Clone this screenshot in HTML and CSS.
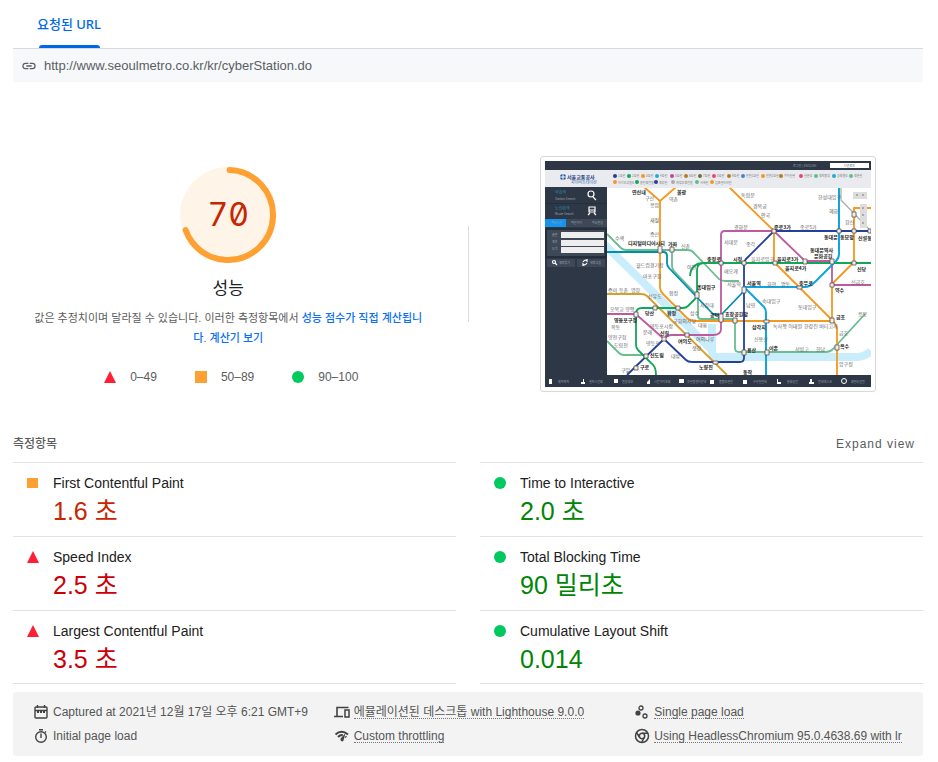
FILE: index.html
```html
<!DOCTYPE html>
<html lang="ko">
<head>
<meta charset="utf-8">
<meta name="viewport" content="width=device-width, initial-scale=1">
<title>성능</title>
<link rel="stylesheet" href="styles.css">
</head>
<body>
<div class="report">
  <nav class="tabs"><button class="tab" type="button">요청된 URL</button></nav>
  <div class="url-bar">
    <svg class="link-icon" viewBox="0 0 24 24"><path d="M3.9 12c0-1.71 1.39-3.1 3.1-3.1h4V7H7a5 5 0 0 0 0 10h4v-1.900H7c-1.710 0-3.100-1.390-3.100-3.100zM8 13h8v-2H8v2zm9-6h-4v1.900h4a3.100 3.100 0 0 1 0 6.200h-4V17h4a5 5 0 0 0 0-10z"/></svg>
    <span>http://www.seoulmetro.co.kr/kr/cyberStation.do</span>
  </div>

  <main>
    <section class="overview">
      <div class="score">
        <div class="gauge">
          <svg class="gauge-ring" viewBox="0 0 96 96"><circle cx="48" cy="48" r="48" fill="#fff4e8"/><circle cx="48" cy="48" r="45" fill="none" stroke="#ffa132" stroke-width="6" stroke-linecap="round" pathLength="100" stroke-dasharray="69 100" transform="rotate(-88 48 48)"/></svg>
          <span class="gauge-value">70</span>
        </div>
        <h1>성능</h1>
        <p class="description">값은 추정치이며 달라질 수 있습니다. 이러한 측정항목에서 <a href="#calc">성능 점수가 직접 계산됩니다</a>. <a href="#calculator">계산기 보기</a></p>
        <div class="legend">
          <span class="range"><svg class="mark" viewBox="0 0 12 12"><path d="M6 0l6 12H0z" fill="#ff1e35"/></svg>0–49</span>
          <span class="range"><svg class="mark" viewBox="0 0 12 12"><path d="M0 0h12v12H0z" fill="#ffa132"/></svg>50–89</span>
          <span class="range"><svg class="mark" viewBox="0 0 12 12"><circle cx="6" cy="6" r="6" fill="#00c95d"/></svg>90–100</span>
        </div>
      </div>
      <div class="divider"></div>
      <div class="preview">
        <svg class="thumbnail" viewBox="545 161 326 226">
          <path fill="#fff" d="M545 161h326v226H545z"/>
          <g fill="none" stroke-width="1.800" stroke-linejoin="round">
            <path d="M605 245L713 351M712 324v28q0 5 6 5h138q9 0 15-6" stroke="#c9edfb" stroke-width="8"/>
            <path d="M841 187v13l30 31" stroke="#aaa" stroke-width="1.200"/>
            <path d="M607 234l14 14q2 2 5 2h62q3 0 5 2l26 27q3 2 6 2h14M672 250v16q0 3 2 5l21 22q3 3 3 6v17q0 3 3 3h31q3 0 3 3v26q0 4 4 4h87q4 0 7-3l32-35M607 341l12 12q2 2 5 2h23" stroke="#69bd91"/>
            <path d="M607 252h56q4 0 4 4v7q0 3 2 5l44 46 8 1 23-24" stroke="#008fa8"/>
            <path d="M607 294h34q4 0 6 2l80 79" stroke="#d5a128"/>
            <path d="M644 187l16 14 16-14M660 201v86q0 4 3 7l24 24q3 3 7 3h136M728 186l46 45v31l58 58q5 5 5 9v46M871 208h-17v54l-22 22v37" stroke="#f49820"/>
            <path d="M607 314h25q4 0 6 2l26 23q3-4 8-4h41q8 0 8-6v-94q0-4 4-4h46q3 0 5 2l29 28h27v23l1 1h38" stroke="#bd5aa0"/>
            <path d="M871 263H704q-7 0-7 7v24q0 3-2 5l-7 7q-2 2-5 2h-41q-6 0-6 6v31q0 3 2 5l13 13q5 3 5 12M690 276q1-13 14-13" stroke="#12a657"/>
            <path d="M871 231H774l-28 28q-2 2-2 5v94q0 4-4 4h-48q-4 0-6-2l-22-21-37 36" stroke="#243f9c"/>
            <path d="M839 187v67q0 4-3 7l-20 20q-6 6-11 6h-61l20 20q2 2 2 6v62" stroke="#10a5df" stroke-width="2"/>
          </g>
          <g fill="#eee" stroke="#5d5149" stroke-width=".8">
            <path d="M658 246h4v7h-4zM670 247h4v5h-4zM719 261h4v4h-4zM742 261h4v4h-4zM772 229h4v4h-4zM773 261h4v4h-4zM803 259h4v5h-4zM830 259h4v5h-4zM837 229h4v4h-4zM852 212h4v5h-4zM852 229h4v4h-4zM852 261h4v4h-4zM868 229h3v4h-3zM695 292h4v6h-4zM634 312h4v5h-4zM653 306h4v4h-4zM676 306h4v4h-4zM662 337h4v4h-4zM685 333h4v4h-4zM644 354h4v4h-4zM634 366h4v4h-4zM719 314h4v8h-4zM733 318h4v5h-4zM742 287h4v6h-4zM797 286h5v3h-5zM830 283h4v4h-4zM830 318h4v5h-4zM764 320h5v3h-5zM742 350h4v5h-4zM765 350h4v5h-4zM835 345h4v5h-4zM713 361h5v3h-5z"/>
          </g>
          <g class="station">
            <text x="645" y="200">구산</text><text x="669" y="201">역촌</text><text x="650" y="207">응암</text><text x="650" y="222">새절</text><text x="650" y="236">증산</text><text x="636" y="267">월드컵경기장</text><text x="643" y="278">마포구청</text><text x="615" y="240">수색</text><text x="681" y="248">신촌</text><text x="687" y="269">아현</text><text x="741" y="197">독립문</text><text x="753" y="208">경복궁</text><text x="761" y="217">안국</text><text x="734" y="229">광화문</text><text x="724" y="244">서대문</text><text x="746" y="246">종각</text><text x="800" y="229">종로5가</text><text x="818" y="199">한성대입구</text><text x="829" y="213">혜화</text><text x="845" y="224">창신</text><text x="751" y="261">을지로입구</text><text x="724" y="273">애오개</text><text x="727" y="286">서울역</text><text x="767" y="286">회현</text><text x="781" y="286">명동</text><text x="762" y="303">숙대입구</text><text x="798" y="309">동대입구</text><text x="746" y="307">남영</text><text x="851" y="284">신금호</text><text x="773" y="328">녹사평 이태원</text><text x="804" y="328">한강진 버티고개</text><text x="754" y="341">신용산</text><text x="795" y="351">서빙고</text><text x="816" y="351">한남</text><text x="839" y="335">금호</text><text x="839" y="366">압구정</text><text x="858" y="316">응봉</text><text x="608" y="292">증미</text><text x="619" y="292">등촌</text><text x="631" y="292">염창</text><text x="648" y="298">선유도</text><text x="669" y="295">합정</text><text x="610" y="311">오목교 양평</text><text x="643" y="334">문래</text><text x="650" y="328">영등포시장</text><text x="673" y="323">국회의사당</text><text x="698" y="327">대흥</text><text x="611" y="329">목동</text><text x="608" y="339">양천구청</text><text x="614" y="347">도림천</text><text x="646" y="345">영등포</text><text x="671" y="358">대방</text><text x="696" y="341">여의나루</text><text x="692" y="350">샛강</text><text x="621" y="372">구일</text><text x="690" y="315">상수</text><text x="700" y="307">서강대</text>
          </g>
          <g class="station major">
            <text x="632" y="194">연신내</text><text x="677" y="194">불광</text><text x="628" y="245">디지털미디어시티</text><text x="668" y="246">가좌</text><text x="707" y="261">충정로</text><text x="733" y="261">시청</text><text x="774" y="229">종로3가</text><text x="777" y="261">을지로3가</text><text x="785" y="270">을지로4가</text><text x="810" y="252">동대문역사</text><text x="814" y="258">문화공원</text><text x="824" y="239">동대문</text><text x="840" y="239">동묘앞</text><text x="858" y="240">신설동</text><text x="857" y="271">신당</text><text x="747" y="285">서울역</text><text x="799" y="285">충무로</text><text x="835" y="292">약수</text><text x="697" y="289">홍대입구</text><text x="710" y="317">공덕</text><text x="725" y="316">효창공원앞</text><text x="752" y="329">삼각지</text><text x="747" y="352">용산</text><text x="769" y="350">이촌</text><text x="840" y="348">옥수</text><text x="645" y="315">당산</text><text x="667" y="315">합정</text><text x="614" y="322">영등포구청</text><text x="660" y="335">신길</text><text x="678" y="343">여의도</text><text x="650" y="357">신도림</text><text x="640" y="369">구로</text><text x="699" y="369">노량진</text><text x="743" y="374">동작</text><text x="836" y="319">금호</text>
          </g>
          <path fill="#e9ebef" d="M545 170h326v18H545z"/>
          <path fill="#2e3746" d="M545 161h326v9H545zM545 187h62v188H545zM545 375h326v12H545z"/>
          <path fill="#fff" d="M830 163h39v5h-39z"/>
          <g class="micro"><text x="793" y="167">로그인 | ENGLISH</text><text x="844" y="167" class="dark-text">다운로드</text></g>
          <circle cx="563" cy="177" r="3" fill="#2858a8"/><path d="M560 177h6M563 174v6" stroke="#fff"/>
          <text class="brand" x="567" y="179">서울교통공사</text><text class="brand-sub" x="571" y="184">사이버스테이션</text>
          <g fill="none" stroke-width="4" stroke-linecap="round">
            <path stroke="#263e95" d="M615 176h0M656 182h0"/><path stroke="#18a35b" d="M629 176h0M637 182h0"/><path stroke="#f49726" d="M643 176h0M615 182h0M763 176h0M712 182h0"/><path stroke="#1eabd7" d="M657 176h0M834 176h0"/><path stroke="#b84b97" d="M672 176h0"/><path stroke="#b47d1c" d="M686 176h0M729 176h0M781 176h0"/><path stroke="#687334" d="M700 176h0"/><path stroke="#e84870" d="M714 176h0M801 176h0"/><path stroke="#4684d1" d="M743 176h0"/><path stroke="#61bd91" d="M816 176h0M851 176h0M697 182h0"/><path stroke="#aaa" d="M673 182h0"/>
          </g>
          <g class="key"><text x="618" y="177">1호선</text><text x="632" y="177">2호선</text><text x="646" y="177">3호선</text><text x="660" y="177">4호선</text><text x="675" y="177">5호선</text><text x="689" y="177">6호선</text><text x="703" y="177">7호선</text><text x="717" y="177">8호선</text><text x="732" y="177">9호선</text><text x="746" y="177">인천1호선</text><text x="766" y="177">인천2호선</text><text x="784" y="177">우이신설</text><text x="804" y="177">신분당</text><text x="819" y="177">경의중앙</text><text x="837" y="177">공항철도</text><text x="854" y="177">경춘선</text><text x="618" y="184">자기부상철도</text><text x="640" y="184">용인경전철</text><text x="659" y="184">경강선</text><text x="676" y="184">의정부경전철</text><text x="700" y="184">서해선</text><text x="715" y="184">김포골드라인</text></g>
          <path fill="#252e3b" d="M545 203h62v1H545zM545 228h62v30H545z"/><path fill="#1693ed" d="M545 219h21v8h-21z"/><path fill="#3e4857" d="M566 219h41v8h-41zM547 230h58v26h-58zM547 259h28v8h-28zM577 259h28v8h-28z"/><path fill="#eee" d="M561 232h43v6h-43zM561 240h43v6h-43zM561 247h43v6h-43z"/>
          <g class="panel-title"><text x="555" y="194">역검색</text><text x="555" y="210">노선검색</text></g>
          <g class="micro"><text x="555" y="200">Station Search</text><text x="555" y="215">Route Search</text><text x="551" y="224">최소시간</text><text x="571" y="224">최단거리</text><text x="592" y="224">최소환승</text><text x="552" y="236">출발</text><text x="552" y="243">경유</text><text x="552" y="250">도착</text><text x="559" y="264">경로찾기</text><text x="590" y="264">새로고침</text></g>
          <g fill="none" stroke="#fff" stroke-width="1.200"><circle cx="591" cy="194" r="3"/><path d="M593 197l3 3M589 207h6v5h-6zM589 210h6M590 213l-2 2M594 213l2 2"/><circle cx="554" cy="262" r="1.500"/><path d="M555 263l2 2M583 262q2-3 4-1v-2M587 263q-2 3-4 1v2"/></g>
          <path fill="#ddd" d="M853 192h14v7h-14zM860 204h7v24h-7z"/><path d="M856 195h2M862 195h2M863 207v2M863 214v2M863 222v2" stroke="#777"/>
          <g fill="#fff"><path d="M549 379h3v5h-3zM581 382h4v2h-4zM583 379h1v3h-1zM614 379h4v4h-4zM647 382l3-3v5h-3zM679 379h5v4h-5zM710 380h4v4h-4zM743 380h4v4h-4zM777 379h1v3h3v2h-4zM810 379h2v3h2v2h-5v-2h1z"/><circle cx="844" cy="381" r="2.500" fill="none" stroke="#fff"/></g>
          <g class="micro"><text x="558" y="383">첫차막차</text><text x="589" y="383">열차시간표</text><text x="622" y="383">환승정보</text><text x="654" y="383">시간거리조회</text><text x="687" y="383">유실물센터안내</text><text x="719" y="383">물품보관함</text><text x="753" y="383">수유실안내</text><text x="787" y="383">문화공간</text><text x="818" y="383">안내데스크</text><text x="851" y="383">화면도움말</text></g>
        </svg>
      </div>
    </section>

    <section class="metrics-section">
      <header class="metrics-header"><h2>측정항목</h2><button class="expand" type="button">Expand view</button></header>
      <div class="metrics">
        <div class="metric average"><svg class="mark" viewBox="0 0 12 12"><path d="M0 1h11v10H0z" fill="#ffa132"/></svg><div class="metric-text"><h3>First Contentful Paint</h3><p>1.6 초</p></div></div>
        <div class="metric pass"><svg class="mark" viewBox="0 0 12 12"><circle cx="6" cy="6" r="6" fill="#00c95d"/></svg><div class="metric-text"><h3>Time to Interactive</h3><p>2.0 초</p></div></div>
        <div class="metric fail"><svg class="mark" viewBox="0 0 12 12"><path d="M6 0l6 12H0z" fill="#ff1e35"/></svg><div class="metric-text"><h3>Speed Index</h3><p>2.5 초</p></div></div>
        <div class="metric pass"><svg class="mark" viewBox="0 0 12 12"><circle cx="6" cy="6" r="6" fill="#00c95d"/></svg><div class="metric-text"><h3>Total Blocking Time</h3><p>90 밀리초</p></div></div>
        <div class="metric fail last"><svg class="mark" viewBox="0 0 12 12"><path d="M6 0l6 12H0z" fill="#ff1e35"/></svg><div class="metric-text"><h3>Largest Contentful Paint</h3><p>3.5 초</p></div></div>
        <div class="metric pass last"><svg class="mark" viewBox="0 0 12 12"><circle cx="6" cy="6" r="6" fill="#00c95d"/></svg><div class="metric-text"><h3>Cumulative Layout Shift</h3><p>0.014</p></div></div>
      </div>
    </section>
  </main>

  <footer class="environment">
    <div class="fact"><svg viewBox="0 0 16 16"><path d="M3 3h10q1 0 1 1v9q0 1-1 1H3q-1 0-1-1V4q0-1 1-1zM2 6.500h12M4.500 1v3M11.500 1v3" fill="none" stroke="#424242" stroke-width="1.400"/><path d="M4 7h2v2H4zM7 7h2v2H7zM10 7h2v2h-2z" fill="#424242"/></svg><span>Captured at 2021년 12월 17일 오후 6:21 GMT+9</span></div>
    <div class="fact"><svg viewBox="0 0 16 16"><path d="M3 12V3.500h11.500M0 12.500h9" fill="none" stroke="#424242" stroke-width="1.600"/><path d="M11 6h4v7h-4z" fill="none" stroke="#424242" stroke-width="1.500"/></svg><span class="hint">에뮬레이션된 데스크톱 with Lighthouse 9.0.0</span></div>
    <div class="fact"><svg viewBox="0 0 16 16"><circle cx="4" cy="9" r="2.600" fill="#424242"/><g fill="none" stroke="#424242" stroke-width="1.300"><circle cx="7" cy="4" r="2"/><circle cx="11" cy="12" r="2"/></g></svg><span class="hint">Single page load</span></div>
    <div class="fact"><svg viewBox="0 0 16 16"><g fill="none" stroke="#424242" stroke-width="1.400"><circle cx="8" cy="9" r="5.300"/><path d="M6 1.700h4M8 5.500V10M12 4.500l1-1"/></g></svg><span>Initial page load</span></div>
    <div class="fact"><svg viewBox="0 0 16 16"><path d="M1.500 6.500Q7.500 1 14 6.500M4 9q2-2.200 4.800-2M11.300 8.500l1 .8" fill="none" stroke="#424242" stroke-width="2"/><path d="M11.500 5L9.500 12.500Q8.500 14 7.200 13t-.5-2.500z" fill="#424242"/></svg><span class="hint">Custom throttling</span></div>
    <div class="fact"><svg viewBox="0 0 16 16"><g fill="none" stroke="#424242" stroke-width="1.500"><circle cx="8" cy="8" r="6.500"/><circle cx="8" cy="8" r="2.700"/><path d="M8 5.300h6M5.700 9.500L2.500 4.500M10.300 9.500L7.500 14.500"/></g></svg><span class="hint">Using HeadlessChromium 95.0.4638.69 with lr</span></div>
  </footer>
</div>
</body>
</html>
```
FILE: styles.css
```css
* { box-sizing: border-box; }
body {
  margin: 0;
  background: #fff;
  color: #212121;
  font: 12px/20px "Liberation Sans", "Noto Sans CJK KR", sans-serif;
}
h1, h2, h3, p { margin: 0; font-weight: 400; }
button { border: 0; padding: 0; background: none; font: inherit; color: inherit; cursor: pointer; }
svg { display: block; flex: none; }
.report { padding: 0 15px 6px 13px; }

.tabs { display: flex; height: 49px; padding-left: 24px; border-bottom: 1px solid #d5d8dd; }
.tab {
  position: relative;
  height: 48px;
  color: #0068e8;
  font: 500 13px/20px "Noto Sans", "Noto Sans CJK KR", sans-serif;
}
.tab::after {
  content: "";
  position: absolute;
  inset: auto 1px 0 2px;
  height: 3px;
  border-radius: 3px 3px 0 0;
  background: #0068e8;
}
.url-bar {
  display: flex;
  align-items: center;
  gap: 7px;
  height: 33px;
  padding-left: 8px;
  background: #f6f8fa;
  color: #5a5e63;
  font-size: 13px;
}
.link-icon { width: 16px; height: 16px; fill: #5a5e63; }

.overview {
  display: grid;
  grid-template-columns: minmax(0, 1fr) 1px minmax(0, 1fr);
  align-items: center;
  padding-top: 74px;
}
.score {
  display: flex;
  flex-direction: column;
  align-items: center;
  padding: 6px 24px 0 0;
}
.gauge { display: grid; place-items: center; }
.gauge > * { grid-area: 1 / 1; }
.gauge-ring { width: 96px; height: 96px; }
.gauge-value {
  color: #c72600;
  font: 400 32px/40px Inter, sans-serif;
  font-feature-settings: "zero", "tnum";
}
h1 { margin-top: 12px; font-size: 17px; line-height: 28px; }
.description { margin-top: 5px; padding: 0 20px; color: #5c5c5c; font-size: 11px; text-align: center; }
.description a { color: #0a6ff2; text-decoration: none; font-weight: 500; }
.legend { display: flex; gap: 38px; margin-top: 19px; padding-left: 6px; color: #5c5c5c; }
.range { display: flex; align-items: center; gap: 14px; }
.mark { width: 12px; height: 12px; }
.divider { height: 96px; background: #dcdcdc; }
.preview { display: flex; justify-content: center; padding-left: 24px; }
.thumbnail { width: 336px; height: 236px; max-width: 100%; padding: 4px; border: 1px solid #d8d8d8; border-radius: 3px; }
.thumbnail text { font-family: "Noto Sans CJK KR", sans-serif; }
.station { fill: #666; font-size: 5px; }
.major { fill: #222; font-weight: 700; }
.micro { fill: #9ba4ae; font-size: 3px; }
.micro .dark-text { fill: #555; }
.panel-title { fill: #258dab; font-size: 4px; }
.brand { fill: #1d4181; font-size: 5px; font-weight: 700; }
.brand-sub { fill: #3c6caa; font-size: 4px; }
.key { fill: #777; font-size: 3px; }

.metrics-section { margin-top: 38px; }
.metrics-header { display: flex; justify-content: space-between; padding: 4px 8px 8px 0; color: #5c5c5c; }
.metrics-header h2 { font-size: 12px; font-weight: 500; line-height: 20px; }
.expand { letter-spacing: 1px; }
.metrics { display: grid; grid-template-columns: repeat(2, minmax(0, 1fr)); column-gap: 24px; }
.metric { display: flex; gap: 14px; padding: 10px 14px 9px; border-top: 1px solid #e3e3e3; }
.metric.last { padding-bottom: 8px; border-bottom: 1px solid #e3e3e3; }
.metric .mark { margin-top: 4px; }
.metric h3 { font-size: 14px; line-height: 20px; }
.metric p { margin-top: 2px; font-size: 25px; line-height: 32px; }
.average p { color: #c72600; }
.fail p { color: #cc0008; }
.pass p { color: #008505; }

.environment {
  display: grid;
  grid-template-columns: repeat(3, minmax(0, 1fr));
  gap: 4px 12px;
  margin-top: 8px;
  padding: 10px 0 10px 20px;
  border-radius: 3px;
  background: #f3f3f3;
  color: #555;
}
.fact { display: flex; align-items: center; gap: 4px; white-space: nowrap; }
.fact svg { width: 16px; height: 16px; }
.hint { line-height: 12px; border-bottom: 1px dotted #777; }
```
